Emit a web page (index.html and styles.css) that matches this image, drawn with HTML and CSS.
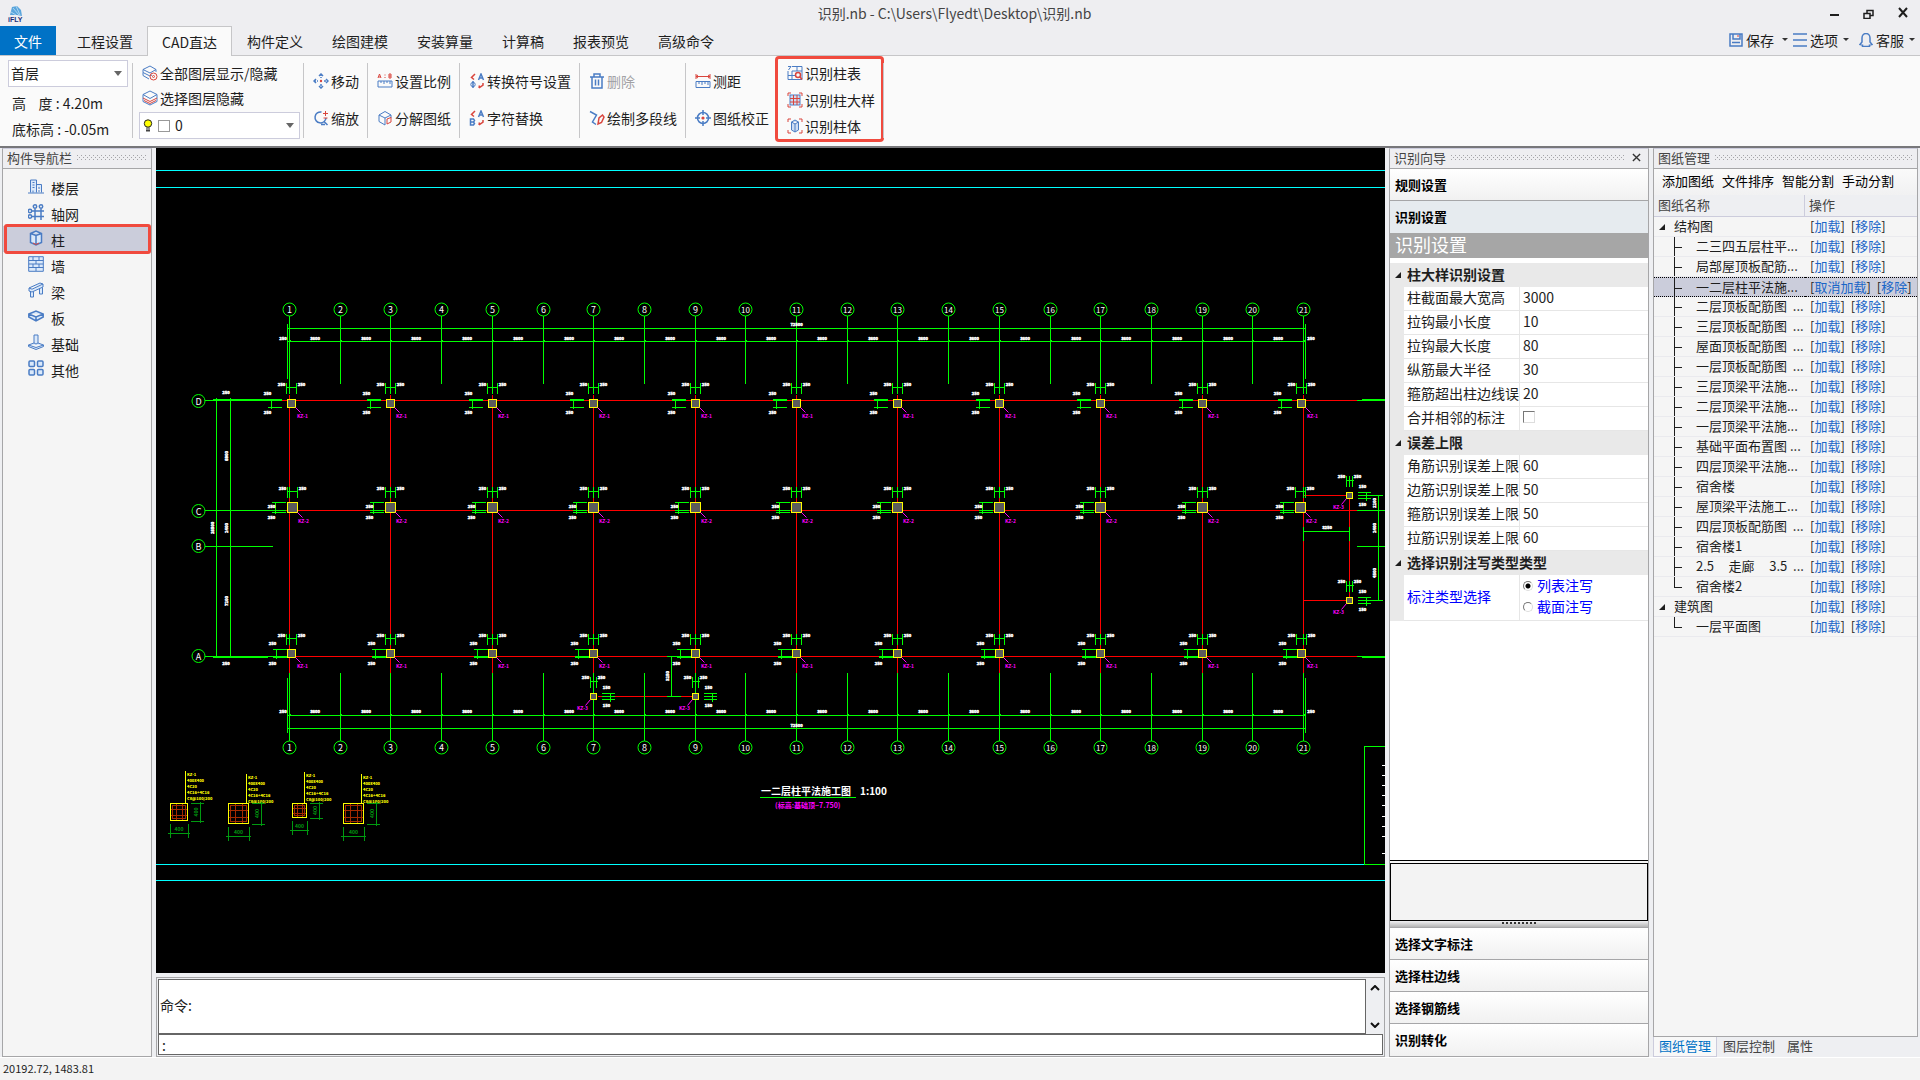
FILE: index.html
```html
<!DOCTYPE html>
<html lang="zh-CN">
<head>
<meta charset="utf-8">
<title>识别.nb</title>
<link rel="stylesheet" href="styles.css">
</head>
<body>
<svg class="sprite" aria-hidden="true">
  <symbol id="i-layers-all" viewBox="0 0 16 16"><g class="b"><path d="M1 4.5 8 1l6 3.5L8 8z"/><path d="M1 4.500v3L8 11l2-1M14 4.500v2.400M1 7.500v3L7 14"/></g><g class="r"><circle cx="11.500" cy="11.500" r="3.500"/><circle cx="11.500" cy="11.500" r="1"/></g></symbol>
  <symbol id="i-layers" viewBox="0 0 16 16"><path class="b" d="M1 4.500 8 1l7 3.500L8 8.500zM1 4.500v7L8 15l7-3.500v-7"/><path class="r" d="M1 8l7 3.500L15 8M2 10.500l6 3 6-3"/></symbol>
  <symbol id="i-bulb" viewBox="0 0 10 14"><circle cx="5" cy="4.500" r="3.700" fill="#ff0" stroke="#222"/><path d="M3 8.500h4v4H3z" fill="#444"/><path d="M3 10h4" stroke="#ddd"/></symbol>
  <symbol id="i-move" viewBox="0 0 16 16"><g class="b w"><path d="M8 1v4M8 11v4M1 8h4M11 8h4" stroke-dasharray="2 1"/><path d="M6 3 8 1l2 2M6 13l2 2 2-2M3 6 1 8l2 2M13 6l2 2-2 2"/></g><circle cx="8" cy="8" r="1.200" fill="#d9453d"/></symbol>
  <symbol id="i-zoom" viewBox="0 0 16 16"><path class="b w" d="M8.500 2A5.500 5.500 0 1 0 13 8M11 11.500l3.500 3.500M8 14.500h4"/><path class="r" d="M12.500 1v5M10 3.500h5M10.500 8h4"/></symbol>
  <symbol id="i-scale" viewBox="0 0 16 16"><path class="r" d="M1 5l1.500-4L4 5M1.500 4h2M12 1v4h2V1zM12 3h2M8 1.500v1M8 4v1"/><path class="b" d="M1 8h14v6H1zM4 8v2M7 8v3M10 8v2M13 8v3"/></symbol>
  <symbol id="i-split" viewBox="0 0 16 16"><path class="b" d="M2 5l6-3.500L14 5 8 8zM2 5v6.500L8 15V8M14 5v3"/><path class="r" d="M10 9l4-1.500V12l-4 2z"/></symbol>
  <symbol id="i-convert" viewBox="0 0 16 16"><path class="b w" d="M9.500 7 12 1l2.500 6M10.500 5h3M4 8v7"/><circle class="b" cx="4" cy="11.500" r="2.200"/><path class="r w" d="M6 1 2.500 4.500 5 6.500M14 10v2l-4 3M10.500 12.500 10 15"/></symbol>
  <symbol id="i-replace" viewBox="0 0 16 16"><path class="b w" d="M9.500 7 12 1l2.500 6M10.500 5h3M1.500 9h3l1 1.500L4.500 12l1 1.500-1 1.500h-3zM1.500 9v6M1.500 12h3"/><path class="r w" d="M6 1 2.500 4.500 5 6.500M14 10v2l-4 3M10.500 12.500 10 15"/></symbol>
  <symbol id="i-trash" viewBox="0 0 16 16"><path class="b w" d="M1 4h14M5 3.500V1h6v2.500M3 4v11h10V4M6.500 6.500v6M9.500 6.500v6"/></symbol>
  <symbol id="i-polyline" viewBox="0 0 16 16"><path class="b w" d="M1 1.500 7.500 5 3.500 12 7 14.500"/><path class="r w" d="M9 14l1-6 3.500-3 1.500 2-2.500 5.500z"/></symbol>
  <symbol id="i-measure" viewBox="0 0 16 16"><path class="r" d="M1 1v5M15 1v5M1 3.500h14M3 2 1 3.500 3 5M13 2l2 1.500L13 5"/><path class="b" d="M1 8.500h14v6H1zM4 9v2M7 9v3M10 9v2M13 9v3"/></symbol>
  <symbol id="i-target" viewBox="0 0 16 16"><g class="b w"><circle cx="8" cy="8" r="5.500"/><path d="M8 0v5M8 11v5M0 8h5M11 8h5"/></g><circle cx="8" cy="8" r="1.600" fill="#d9453d"/></symbol>
  <symbol id="i-coltable" viewBox="0 0 16 16"><path class="b" d="M5 1.500h10v13H1V6M1 10.500h8M5 6v8M5 6h10M10 1.500V6M1 1.500h3L1.500 5"/><g class="r w"><circle cx="11" cy="10" r="2.500"/><path d="m13 12 2 2.500"/></g></symbol>
  <symbol id="i-coldetail" viewBox="0 0 16 16"><rect x="3" y="3" width="10" height="10" fill="#cddcf2" stroke="#4a7cc4"/><path class="r" d="M1 4V1h3M12 1h3v3M1 12v3h3M12 15h3v-3M6.500 3v10M10 3v10M3 6.500h10M3 10h10"/></symbol>
  <symbol id="i-colbody" viewBox="0 0 16 16"><path class="r" d="M1 4V1h3M12 1h3v3M1 12v3h3M12 15h3v-3"/><path d="M4.500 4 8 2l3.500 2v8L8 14l-3.500-2zM4.500 4 8 6l3.500-2M8 6v8" fill="#cddcf2" stroke="#4a7cc4"/></symbol>
  <symbol id="i-floor" viewBox="0 0 16 16"><g class="f"><path d="M2.500 14.500V2h6v12.500M8.500 6.500h5v8"/><path d="M0 15h16M4.500 4.500h2M4.500 7h2M4.500 9.500h2M5 12.500v2M11 9v2M11 12v2"/></g></symbol>
  <symbol id="i-axis" viewBox="0 0 16 16"><g class="b w"><circle cx="7" cy="2.500" r="1.700"/><circle cx="13" cy="2.500" r="1.700"/><circle cx="2" cy="7" r="1.700"/><circle cx="2" cy="12.500" r="1.700"/><path d="M7 4.500V16M13 4.500V16M4 7h12M4 12.500h12"/></g></symbol>
  <symbol id="i-column" viewBox="0 0 16 16"><path class="f w" d="M2.500 3.500 8 1l5.500 2.500v9L8 15l-5.500-2.500zM2.500 3.500 8 5.500l5.500-2M8 5.500V14"/><path class="r" d="m5 13 3 1.500 3-1.500"/></symbol>
  <symbol id="i-wall" viewBox="0 0 16 16"><path class="f" d="M.7.700h14.600v14.600H.7zM.7 4.500h14.600M.7 8h14.600M.7 11.500h14.600M5 1v3.500M11 1v3.500M8 4.500V8M5 8v3.500M11 8v3.500M8 11.500V15"/></symbol>
  <symbol id="i-beam" viewBox="0 0 16 16"><path class="f" d="M1 6 12 1l3 1v3L4 10l-3-1zM1 6l3 1.200L15 2M2.500 9.500V15h3V9.500M11.500 6.500V12h3V5.500"/></symbol>
  <symbol id="i-slab" viewBox="0 0 16 16"><path class="f w" d="M.8 6 8 3l7.200 3v3L8 13 .8 9zM.8 6 8 9l7.200-3M8 9v3.500"/></symbol>
  <symbol id="i-base" viewBox="0 0 16 16"><path class="f" d="M6 1h4v8l5.500 2v1.500L8 15.500.5 12.500V11L6 9zM.5 11 8 13.500 15.500 11M6 9l2 1 2-1"/></symbol>
  <symbol id="i-other" viewBox="0 0 16 16"><g class="f w"><rect x="1" y="1" width="5.500" height="5.500" rx="1"/><rect x="9.500" y="1" width="5.500" height="5.500" rx="1"/><rect x="1" y="9.500" width="5.500" height="5.500" rx="1"/><rect x="9.500" y="9.500" width="5.500" height="5.500" rx="1"/></g></symbol>
  <symbol id="i-save" viewBox="0 0 14 14"><path class="b w" d="M1 1h12v12H1zM4 1v5h7V1M3 9.500h8"/><path class="r" d="M9 2v2"/></symbol>
  <symbol id="i-options" viewBox="0 0 14 14"><path class="b w" d="M0 1h14M0 7h14M0 13h14"/></symbol>
  <symbol id="i-service" viewBox="0 0 14 14"><path class="b w" d="M3 9V5a4 4.500 0 0 1 8 0v4l2 2.500-2.500.5v1.500h-7V12L1 11.500z"/></symbol>
</svg>

<header class="titlebar">
  <svg class="logo" viewBox="0 0 16 18" role="img" aria-label="iFLY"><path d="M2 10 4 2l5-1 4 4 1 6-5-1z" fill="#5aa5dc"/><path d="M5 3l6 7M3 7l5 3M8 1l4 9" stroke="#bfe0f5" stroke-width=".8"/><text x="0" y="17" class="logo-text">iFLY</text></svg>
  <h1 class="title">识别.nb - C:\Users\Flyedt\Desktop\识别.nb</h1>
  <div class="window-buttons">
    <button type="button" aria-label="最小化"><svg viewBox="0 0 12 12"><path d="M1 8h9" stroke-width="2"/></svg></button>
    <button type="button" aria-label="还原"><svg viewBox="0 0 12 12"><path d="M1 6.500h6v5H1zM4 6V3.500h6v5H7" stroke-width="1.500"/></svg></button>
    <button type="button" aria-label="关闭"><svg viewBox="0 0 12 12"><path d="m2 1 8 9M10 1 2 10" stroke-width="2"/></svg></button>
  </div>
</header>

<nav class="tabs">
  <button type="button" class="tab tab-file">文件</button>
  <button type="button" class="tab">工程设置</button>
  <button type="button" class="tab tab-active">CAD直达</button>
  <button type="button" class="tab">构件定义</button>
  <button type="button" class="tab">绘图建模</button>
  <button type="button" class="tab">安装算量</button>
  <button type="button" class="tab">计算稿</button>
  <button type="button" class="tab">报表预览</button>
  <button type="button" class="tab">高级命令</button>
  <div class="quick">
    <button type="button" class="caret quick-save"><svg><use href="#i-save"/></svg>保存</button>
    <button type="button" class="caret"><svg><use href="#i-options"/></svg>选项</button>
    <button type="button" class="caret quick-service"><svg><use href="#i-service"/></svg>客服</button>
  </div>
</nav>

<section class="ribbon">
  <div class="group group-floor">
    <span class="combo"><select aria-label="楼层"><option>首层</option></select></span>
    <span>高 &nbsp; &nbsp;度 : 4.20m</span>
    <span>底标高 : -0.05m</span>
  </div>
  <div class="group group-layers">
    <button type="button" class="tool"><svg><use href="#i-layers-all"/></svg>全部图层显示/隐藏</button>
    <button type="button" class="tool"><svg><use href="#i-layers"/></svg>选择图层隐藏</button>
    <span class="combo"><svg class="bulb"><use href="#i-bulb"/></svg><i class="swatch"></i><select aria-label="图层"><option>0</option></select></span>
  </div>
  <div class="group">
    <button type="button" class="tool"><svg><use href="#i-move"/></svg>移动</button>
    <button type="button" class="tool"><svg><use href="#i-zoom"/></svg>缩放</button>
  </div>
  <div class="group">
    <button type="button" class="tool"><svg><use href="#i-scale"/></svg>设置比例</button>
    <button type="button" class="tool"><svg><use href="#i-split"/></svg>分解图纸</button>
  </div>
  <div class="group">
    <button type="button" class="tool"><svg><use href="#i-convert"/></svg>转换符号设置</button>
    <button type="button" class="tool"><svg><use href="#i-replace"/></svg>字符替换</button>
  </div>
  <div class="group">
    <button type="button" class="tool" disabled><svg><use href="#i-trash"/></svg>删除</button>
    <button type="button" class="tool"><svg><use href="#i-polyline"/></svg>绘制多段线</button>
  </div>
  <div class="group group-measure">
    <button type="button" class="tool"><svg><use href="#i-measure"/></svg>测距</button>
    <button type="button" class="tool"><svg><use href="#i-target"/></svg>图纸校正</button>
  </div>
  <div class="group group-columns">
    <button type="button" class="tool"><svg><use href="#i-coltable"/></svg>识别柱表</button>
    <button type="button" class="tool"><svg><use href="#i-coldetail"/></svg>识别柱大样</button>
    <button type="button" class="tool"><svg><use href="#i-colbody"/></svg>识别柱体</button>
  </div>
</section>

<main class="workspace">
  <aside class="panel panel-nav">
    <h2 class="panel-head"><span>构件导航栏</span><i class="grip"></i></h2>
    <ul class="nav-list">
      <li><a href="#"><svg><use href="#i-floor"/></svg>楼层</a></li>
      <li><a href="#"><svg><use href="#i-axis"/></svg>轴网</a></li>
      <li><a href="#" class="selected"><svg><use href="#i-column"/></svg>柱</a></li>
      <li><a href="#"><svg><use href="#i-wall"/></svg>墙</a></li>
      <li><a href="#"><svg><use href="#i-beam"/></svg>梁</a></li>
      <li><a href="#"><svg><use href="#i-slab"/></svg>板</a></li>
      <li><a href="#"><svg><use href="#i-base"/></svg>基础</a></li>
      <li><a href="#"><svg><use href="#i-other"/></svg>其他</a></li>
    </ul>
  </aside>

  <div class="center">
    <svg id="drawing" class="drawing" viewBox="156 148 1229 825" role="img" aria-label="一二层柱平法施工图"></svg>
    <div class="command">
      <div class="command-log">
        <output class="command-text">命令:</output>
        <div class="scroll">
          <button type="button" aria-label="向上"><svg viewBox="0 0 10 6"><path d="m1 5 4-4 4 4"/></svg></button>
          <button type="button" aria-label="向下"><svg viewBox="0 0 10 6"><path d="m1 1 4 4 4-4"/></svg></button>
        </div>
      </div>
      <input class="command-input" type="text" aria-label="命令输入" value=":">
    </div>
  </div>

  <aside class="panel panel-wizard">
    <h2 class="panel-head"><span>识别向导</span><i class="grip"></i><button type="button" class="close" aria-label="关闭"><svg viewBox="0 0 10 10"><path d="m1 1 8 8M9 1 1 9"/></svg></button></h2>
    <button type="button" class="step">规则设置</button>
    <button type="button" class="step step-open">识别设置</button>
    <h3 class="banner">识别设置</h3>
    <div class="props">
      <table>
        <colgroup><col class="c-gutter"><col class="c-name"><col></colgroup>
        <tbody>
          <tr class="cat"><th colspan="3">柱大样识别设置</th></tr>
          <tr><td></td><td><label for="p1">柱截面最大宽高</label></td><td><input id="p1" type="text" value="3000"></td></tr>
          <tr><td></td><td><label for="p2">拉钩最小长度</label></td><td><input id="p2" type="text" value="10"></td></tr>
          <tr><td></td><td><label for="p3">拉钩最大长度</label></td><td><input id="p3" type="text" value="80"></td></tr>
          <tr><td></td><td><label for="p4">纵筋最大半径</label></td><td><input id="p4" type="text" value="30"></td></tr>
          <tr><td></td><td><label for="p5">箍筋超出柱边线误</label></td><td><input id="p5" type="text" value="20"></td></tr>
          <tr><td></td><td><label for="p6">合并相邻的标注</label></td><td><input id="p6" type="checkbox"></td></tr>
          <tr class="cat"><th colspan="3">误差上限</th></tr>
          <tr><td></td><td><label for="p7">角筋识别误差上限</label></td><td><input id="p7" type="text" value="60"></td></tr>
          <tr><td></td><td><label for="p8">边筋识别误差上限</label></td><td><input id="p8" type="text" value="50"></td></tr>
          <tr><td></td><td><label for="p9">箍筋识别误差上限</label></td><td><input id="p9" type="text" value="50"></td></tr>
          <tr><td></td><td><label for="p10">拉筋识别误差上限</label></td><td><input id="p10" type="text" value="60"></td></tr>
          <tr class="cat"><th colspan="3">选择识别注写类型类型</th></tr>
          <tr class="choice"><td></td><td>标注类型选择</td><td>
            <label><input type="radio" name="kind" checked>列表注写</label>
            <label><input type="radio" name="kind">截面注写</label>
          </td></tr>
        </tbody>
      </table>
    </div>
    <div class="hint"></div>
    <div class="splitter"><i></i></div>
    <button type="button" class="step">选择文字标注</button>
    <button type="button" class="step">选择柱边线</button>
    <button type="button" class="step">选择钢筋线</button>
    <button type="button" class="step">识别转化</button>
  </aside>

  <aside class="manager">
    <div class="panel panel-manager">
      <h2 class="panel-head"><span>图纸管理</span><i class="grip"></i></h2>
      <div class="manager-tools">
        <button type="button">添加图纸</button><button type="button">文件排序</button><button type="button">智能分割</button><button type="button">手动分割</button>
      </div>
      <table class="tree">
        <thead><tr><th>图纸名称</th><th>操作</th></tr></thead>
        <tbody>
          <tr class="root"><td>结构图</td><td>[<a href="#">加载</a>]<span>[<a href="#">移除</a>]</span></td></tr>
          <tr><td>二三四五层柱平...</td><td>[<a href="#">加载</a>]<span>[<a href="#">移除</a>]</span></td></tr>
          <tr><td>局部屋顶板配筋...</td><td>[<a href="#">加载</a>]<span>[<a href="#">移除</a>]</span></td></tr>
          <tr class="current"><td>一二层柱平法施...</td><td>[<a href="#">取消加载</a>]<span>[<a href="#">移除</a>]</span></td></tr>
          <tr><td>二层顶板配筋图 &nbsp;...</td><td>[<a href="#">加载</a>]<span>[<a href="#">移除</a>]</span></td></tr>
          <tr><td>三层顶板配筋图 &nbsp;...</td><td>[<a href="#">加载</a>]<span>[<a href="#">移除</a>]</span></td></tr>
          <tr><td>屋面顶板配筋图 &nbsp;...</td><td>[<a href="#">加载</a>]<span>[<a href="#">移除</a>]</span></td></tr>
          <tr><td>一层顶板配筋图 &nbsp;...</td><td>[<a href="#">加载</a>]<span>[<a href="#">移除</a>]</span></td></tr>
          <tr><td>三层顶梁平法施...</td><td>[<a href="#">加载</a>]<span>[<a href="#">移除</a>]</span></td></tr>
          <tr><td>二层顶梁平法施...</td><td>[<a href="#">加载</a>]<span>[<a href="#">移除</a>]</span></td></tr>
          <tr><td>一层顶梁平法施...</td><td>[<a href="#">加载</a>]<span>[<a href="#">移除</a>]</span></td></tr>
          <tr><td>基础平面布置图 ...</td><td>[<a href="#">加载</a>]<span>[<a href="#">移除</a>]</span></td></tr>
          <tr><td>四层顶梁平法施...</td><td>[<a href="#">加载</a>]<span>[<a href="#">移除</a>]</span></td></tr>
          <tr><td>宿舍楼</td><td>[<a href="#">加载</a>]<span>[<a href="#">移除</a>]</span></td></tr>
          <tr><td>屋顶梁平法施工...</td><td>[<a href="#">加载</a>]<span>[<a href="#">移除</a>]</span></td></tr>
          <tr><td>四层顶板配筋图 &nbsp;...</td><td>[<a href="#">加载</a>]<span>[<a href="#">移除</a>]</span></td></tr>
          <tr><td>宿舍楼1</td><td>[<a href="#">加载</a>]<span>[<a href="#">移除</a>]</span></td></tr>
          <tr><td>2.5 &nbsp; &nbsp; 走廊 &nbsp; &nbsp; 3.5 &nbsp;...</td><td>[<a href="#">加载</a>]<span>[<a href="#">移除</a>]</span></td></tr>
          <tr class="last"><td>宿舍楼2</td><td>[<a href="#">加载</a>]<span>[<a href="#">移除</a>]</span></td></tr>
          <tr class="root"><td>建筑图</td><td>[<a href="#">加载</a>]<span>[<a href="#">移除</a>]</span></td></tr>
          <tr class="last"><td>一层平面图</td><td>[<a href="#">加载</a>]<span>[<a href="#">移除</a>]</span></td></tr>
        </tbody>
      </table>
    </div>
    <nav class="bottom-tabs">
      <button type="button" class="active">图纸管理</button>
      <button type="button">图层控制</button>
      <button type="button">属性</button>
    </nav>
  </aside>
</main>

<footer class="status">20192.72, 1483.81</footer>
<script src="drawing.js"></script>
</body>
</html>
```
FILE: styles.css
```css
* { box-sizing: border-box; }

body {
  margin: 0;
  min-height: 100vh;
  display: flex;
  flex-direction: column;
  background: #eeeff2;
  color: #1e1e1e;
  font: 14px/20px "Noto Sans CJK SC", "Noto Sans", sans-serif;
}

button, input, select { font: inherit; color: inherit; }
button { padding: 0; border: 0; background: none; white-space: nowrap; }
h1, h2, h3 { margin: 0; font-weight: 400; }

.sprite { display: none; }
.b { fill: none; stroke: #4a7cc4; }
.r { fill: none; stroke: #d9453d; }
.f { fill: #dbe9fa; stroke: #4a7cc4; }
.w { stroke-width: 1.5; }

/* Title bar */
.titlebar {
  height: 26px;
  display: grid;
  grid-template-columns: 1fr auto 1fr;
  align-items: center;
  padding: 0 11px 0 8px;
  background: #eeeef1;
}
.logo { width: 16px; height: 18px; margin-top: 2px; }
.logo-text { font: 900 7px "Liberation Sans", sans-serif; fill: #1a2f7a; }
.title { padding-right: 8px; font-size: 14px; color: #444; }
.window-buttons { justify-self: end; display: flex; gap: 22px; }
.window-buttons button { display: flex; }
.window-buttons svg { width: 12px; height: 12px; fill: none; stroke: #1e1e1e; }

/* Ribbon tabs */
.tabs {
  height: 30px;
  display: flex;
  background: #eeeef1;
  border-bottom: 1px solid #c6c6c8;
}
.tab { padding: 0 14px 0 15px; height: 29px; }
.tab-file { width: 56px; margin-right: 6px; padding: 0; background: #0072c6; color: #fff; }
.tab-active {
  height: 30px;
  padding: 0 14px;
  border: 1px solid #c6c6c8;
  border-bottom: 0;
  background: #fafafa;
}
.quick { margin-left: auto; display: flex; align-items: center; padding: 0 5px 2px 0; }
.quick button { display: flex; align-items: center; gap: 3px; }
.quick svg { width: 14px; height: 14px; }
.quick-service { margin-left: 10px; }
.quick-save { margin-right: 5px; }
.caret::after {
  content: "";
  margin-left: 2px;
  border: 3px solid transparent;
  border-top-color: #333;
  border-bottom: 0;
}
.quick-save::after { margin-left: 5px; }

/* Ribbon */
.ribbon {
  min-height: 92px;
  display: flex;
  padding: 4px 0 3px;
  background: #fafafa;
  border-bottom: 2px solid #77777a;
}
.group {
  position: relative;
  display: flex;
  flex-direction: column;
  justify-content: space-around;
  align-items: flex-start;
  padding: 2px 9px 6px 9px;
}
.group::after {
  content: "";
  position: absolute;
  right: 0;
  top: 3px;
  bottom: 5px;
  width: 1px;
  background: #c6c6c8;
}
.group-floor { padding: 0 5px 4px 8px; justify-content: space-between; }
.group-floor > span:not(.combo) { padding-left: 4px; }
.group-layers { padding: 3px 4px 4px 6px; justify-content: space-between; }
.group-layers .tool { padding-left: 3px; }
.group-columns { padding: 3px 9px 7px 9px; justify-content: space-between; }
.group-columns::before {
  content: "";
  position: absolute;
  inset: -4px 0 1px -3px;
  border: 3px solid #f04a3e;
  border-radius: 4px;
}
.tool { display: flex; align-items: center; gap: 2px; }
.tool svg { width: 16px; height: 16px; }
.tool:disabled { color: #a2a2a6; }
.combo {
  position: relative;
  width: 120px;
  height: 27px;
  display: flex;
  align-items: center;
  border: 1px solid #ccccdc;
  background: #fff;
}
.combo::after {
  content: "";
  position: absolute;
  right: 5px;
  border: 4px solid transparent;
  border-top: 5px solid #666;
  border-bottom: 0;
}
.combo select {
  flex: 1;
  appearance: none;
  border: 0;
  padding: 0 2px 2px;
  background: transparent;
}
.group-layers .combo { width: 161px; padding-left: 3px; }
.bulb { width: 10px; height: 14px; }
.swatch { width: 12px; height: 12px; margin: 0 3px 0 5px; border: 1px solid #999; }

/* Workspace */
.workspace {
  flex: 1;
  display: flex;
  gap: 4px;
  padding: 0 2px 0 2px;
  background: #eeeff2;
}
.panel {
  display: flex;
  flex-direction: column;
  border: 1px solid #a6a6a8;
  border-top-color: #ccccdc;
  background: #f5f5f5;
}
.panel-nav { width: 150px; }
.panel-wizard { width: 260px; }
.manager { width: 265px; display: flex; flex-direction: column; }
.panel-manager { flex: 1; }
.panel-head {
  height: 20px;
  display: flex;
  align-items: center;
  gap: 5px;
  padding: 0 4px 2px;
  border-bottom: 1px solid #a6a6a8;
  background: #eeeef1;
  font-size: 13px;
  line-height: 16px;
  color: #444;
}
.grip {
  flex: 1;
  height: 6px;
  background:
    conic-gradient(at 1px 1px, transparent 75%, #a4a4a8 0) 0 0 / 4px 4px,
    conic-gradient(at 1px 1px, transparent 75%, #a4a4a8 0) 2px 2px / 4px 4px;
}
.close { display: flex; padding: 3px; }
.close svg { width: 9px; height: 9px; stroke: #333; stroke-width: 1.500; }

/* Component navigation */
.nav-list { list-style: none; margin: 0; padding: 5px 0 0; }
.nav-list a {
  position: relative;
  height: 26px;
  display: flex;
  align-items: center;
  gap: 7px;
  padding: 2px 0 0 25px;
  color: #1e1e1e;
  text-decoration: none;
}
.nav-list svg { width: 16px; height: 16px; margin-bottom: 5px; }
.nav-list .selected { background: #cbcddb; }
.selected::after {
  content: "";
  position: absolute;
  inset: -2px 0 -2px 1px;
  border: 3px solid #f04a3e;
  border-radius: 3px;
}

/* Drawing and command line */
.center { flex: 1; min-width: 0; display: flex; flex-direction: column; gap: 4px; }
.drawing { flex: 1 1 0; min-height: 0; width: 100%; background: #000; }
.drawing text { font-family: "Noto Sans CJK SC", sans-serif; text-anchor: middle; }
.drawing .start { text-anchor: start; }
.ln { fill: none; shape-rendering: crispEdges; }
.green { stroke: #0f0; }
.red { stroke: #f00; }
.cyan { stroke: #0ff; }
.white { stroke: #fff; }
.thick { stroke-width: 2; }
.dark { stroke: #009a10; }
.bar { stroke: #a32a00; }
.leader { stroke: #f0f; fill: none; }
.yellow { stroke: #ff0; }
.col { fill: #5c5c5c; stroke: #ff0; shape-rendering: crispEdges; }
.bubble { fill: none; stroke: #0f0; }
.t-axis { fill: #fff; font-size: 9px; }
.t-axis2 { fill: #fff; font-size: 8px; }
.t-dim { fill: #fff; stroke: #fff; stroke-width: .4px; font-size: 4px; font-weight: 900; }
.t-col { fill: #f0f; font-size: 5px; font-weight: 700; }
.t-note { fill: #ff0; font-size: 4px; font-weight: 900; }
.t-dark { fill: #009a10; font-size: 5px; font-weight: 700; }
.t-title { fill: #fff; font-size: 10px; font-weight: 700; }
.t-sub { fill: #f0f; font-size: 7px; font-weight: 700; }
.command {
  height: 80px;
  display: flex;
  flex-direction: column;
  padding: 1px;
  border: 1px solid #a6a6a8;
}
.command-log { flex: 1; display: flex; gap: 1px; }
.command-text {
  flex: 1;
  display: flex;
  align-items: center;
  padding: 0 0 4px 1px;
  border: 1px solid #666;
  background: #fff;
}
.scroll { width: 16px; display: flex; flex-direction: column; justify-content: space-between; align-items: center; padding: 6px 0; }
.scroll button { display: flex; }
.scroll svg { width: 10px; height: 6px; fill: none; stroke: #111; stroke-width: 2; }
.command-input { width: 100%; height: 21px; padding: 0 3px; border: 1px solid #666; background: #fff; }

/* Recognition wizard */
.step {
  height: 32px;
  flex: none;
  padding-left: 5px;
  border-bottom: 1px solid #a6a6a8;
  background: linear-gradient(#fff, #f1f1f1);
  font-size: 13px;
  font-weight: 700;
  text-align: left;
  color: #000;
}
.step:last-child { border-bottom: 0; }
.step-open { background: #e6ebef; border-bottom: 0; }
.banner { height: 25px; padding-left: 5px; background: #a6a6a6; color: #fff; font-size: 18px; line-height: 22px; }
.props { flex: 1; padding-top: 5px; background: #fff; border-bottom: 1px solid #000; }
.props table { width: 100%; border-spacing: 0; table-layout: fixed; }
.c-gutter { width: 14px; }
.c-name { width: 116px; }
.props th { height: 24px; padding: 0 0 2px; text-align: left; background: #e9e9e9; line-height: 20px; }
.props th::before {
  content: "";
  display: inline-block;
  margin: 0 6px 2px 5px;
  border-left: 6px solid transparent;
  border-bottom: 6px solid #1e1e1e;
}
.props td { height: 24px; padding: 0 0 3px; border-bottom: 1px solid #e6e6e6; line-height: 20px; white-space: nowrap; }
.props td:first-child { background: #e9e9e9; border-color: #e9e9e9; }
.props td:nth-child(2) { padding-left: 3px; border-right: 1px solid #e6e6e6; }
.props td:nth-child(3) { padding-left: 3px; }
.props input[type="text"] { display: block; width: 100%; height: 20px; padding: 0; border: 0; background: none; }
.props input[type="checkbox"] {
  appearance: none;
  display: block;
  width: 12px;
  height: 12px;
  margin: 0;
  border: 1px solid #777;
  border-right-color: #ddd;
  border-bottom-color: #ddd;
}
.props .choice td { color: #00f; height: 46px; }
.choice label { display: flex; align-items: center; gap: 4px; height: 21px; line-height: 21px; }
.choice input {
  appearance: none;
  width: 10px;
  height: 10px;
  margin: 0;
  border: 1px solid #777;
  border-right-color: #ddd;
  border-bottom-color: #ddd;
  border-radius: 50%;
}
.choice input:checked { background: radial-gradient(circle, #000 2px, #fff 3px); }
.hint { height: 58px; margin-top: 2px; border: 1px solid #000; background: #f3f3f3; }
.splitter {
  height: 7px;
  display: flex;
  justify-content: center;
  border-bottom: 1px solid #a6a6a8;
  background: linear-gradient(#f0f0f2, #b4b4b4);
}
.splitter i { width: 35px; height: 2px; margin-top: 1px; background: repeating-linear-gradient(90deg, #333 0 2px, transparent 2px 4px); }

/* Drawing manager */
.manager-tools {
  height: 26px;
  display: flex;
  gap: 8px;
  padding: 0 8px 2px;
  background: linear-gradient(#fafafa, #f1f1f2);
  font-size: 13px;
  color: #000;
}
.tree { width: 100%; border-spacing: 0; table-layout: fixed; font-size: 13px; line-height: 16px; }
.tree th {
  height: 22px;
  padding: 0 4px 2px;
  border-bottom: 1px solid #ccccdc;
  background: #eeeff2;
  font-weight: 400;
  text-align: left;
  color: #444;
}
.tree th:first-child { width: 151px; border-right: 1px solid #ccccdc; }
.tree td { position: relative; height: 20px; padding: 0 0 2px 5px; border-bottom: 1px solid #eaeaee; white-space: nowrap; }
.tree td:first-child { padding-left: 42px; }
.tree td:first-child::before {
  content: "";
  position: absolute;
  left: 20px;
  top: 0;
  height: 19px;
  border-left: 1px solid #1e1e1e;
}
.tree td:first-child::after {
  content: "";
  position: absolute;
  left: 20px;
  top: 10px;
  width: 8px;
  border-top: 1px solid #1e1e1e;
}
.tree .last td:first-child::before { height: 10px; }
.tree .root td:first-child { padding-left: 20px; }
.tree .root td:first-child::after { display: none; }
.tree .root td:first-child::before {
  left: 5px;
  top: 7px;
  height: 0;
  border-left: 6px solid transparent;
  border-bottom: 6px solid #1e1e1e;
}
.tree a { color: #1a66c8; text-decoration: none; }
.tree td span { margin-left: 6px; }
.tree .current td { padding-bottom: 1px; background: #cbcddb; border-top: 1px dotted #000; border-bottom: 1px dotted #000; }
.bottom-tabs { height: 20px; display: flex; font-size: 13px; line-height: 16px; color: #444; }
.bottom-tabs button { padding: 0 6px 2px; }
.bottom-tabs .active { padding: 0 5px 2px; border: 1px solid #ccccdc; border-top: 0; background: #f8f8f8; color: #0072c6; }

.status { height: 23px; padding-left: 3px; border-top: 1px solid #fff; background: #f3f3f3; font-size: 11px; line-height: 21px; }
```
FILE: drawing.js
```js
// Column plan: axes, dimensions, columns and section details, in sheet units.
const svg = document.getElementById("drawing");
const parts = [];
const line = (cls, d) => parts.push(`<path class="ln ${cls}" d="${d}"/>`);
const text = (cls, x, y, s, rot) =>
  parts.push(`<text class="${cls}" x="${x}" y="${y}"${rot ? ` transform="rotate(-90 ${x} ${y})"` : ""}>${s}</text>`);
const bubble = (x, y, s) => {
  parts.push(`<circle class="bubble" cx="${x}" cy="${y}" r="6.5"/>`);
  text(s > 9 ? "t-axis2" : "t-axis", x, y + 3.5, s);
};
const axisX = n => Math.round(289 + (n - 1) * 50.7) + 0.5;

line("cyan", "M156 170.5H1385M156 187.5H1385M156 864.5H1385M156 880.5H1385");

// Red grid
line("red", "M282 400.5H1357M282 510.5H1357M282 656.500H1357");
for (let n = 1; n <= 21; n += 2) line("red", `M${axisX(n)} 395V673`);
line("red", "M598 696.5H695M1303 495.5H1347M1303 600.5H1349M1349.5 499V597");

// Numbered axes
for (let n = 1; n <= 21; n++) {
  const x = axisX(n);
  bubble(x, 309.5, n);
  bubble(x, 747.5, n);
  line("green", `M${x} 316V${n % 2 ? 394 : 384}M${x} 673V741`);
  if (n < 21) {
    text("t-dim", x + 25.5, 339.5, "3600");
    text("t-dim", x + 25.5, 712.500, "3600");
  }
  line("green", `M${x - 1} 342l2-2M${x - 1} 716l2-2`);
}
line("green", "M287 328.5H1306M287 341.5H1306M287.5 324V379M1305.5 324V379");
line("green", "M287 715.5H1306M287 728.5H1306M287.5 678V733M1305.5 678V733");
for (const y of [339.5, 712.5]) {
  text("t-dim", 283, y, "250");
  text("t-dim", 1311, y, "250");
}
text("t-dim", 796.5, 326, "72500");
text("t-dim", 796.5, 726.5, "72500");

// Lettered axes
[["D", 401], ["C", 511], ["B", 546], ["A", 656]].forEach(([s, y]) => bubble(198.5, y, s));
line("green", "M205 400.5H273M205 510.5H282M205 546.5H273M205 656.5H273M216.5 398V658M230.5 398V658");
line("green", "M1357 400.5H1385M1357 510.5H1385M1357 546.5H1385M1357 656.5H1385");
line("green thick", "M213 400H268M213 657H268M1362 400H1385M1362 657H1385");
text("t-dim", 228, 456, "6900", 1);
text("t-dim", 214, 528, "16500", 1);
text("t-dim", 228, 528, "2400", 1);
text("t-dim", 228, 601, "7200", 1);
text("t-dim", 226, 394, "250");
text("t-dim", 226, 665, "250");

// Columns on axes D, C and A
const rows = [
  { y: 403.5, size: 9, top: 383, bar: [399.5, 400.5, 407.5], left: 20, label: "KZ-1", notes: [394.5, 414] },
  { y: 507.5, size: 11, top: 487, bar: [502.5, 510.5, 512.5], left: 17, label: "KZ-2", notes: [507.500, 519] },
  { y: 653.5, size: 9, top: 634, bar: [649.5, 656.5, 657.5], left: 15, label: "KZ-1", notes: [645, 664.5] }
];
for (const r of rows) {
  for (let n = 1; n <= 21; n += 2) {
    const ax = axisX(n);
    const shift = r.size === 11 ? 3 : 2;
    const x = n === 1 ? ax + shift : n === 21 ? ax - shift : ax;
    const h = (r.size - 1) / 2;
    line("green", `M${x - 5} ${r.top}v11M${ax} ${r.top}v11M${x + 5} ${r.top}v11M${x - 5} ${r.top + 4.5}h10`);
    text("t-dim", x - 10, r.top + 2.500, "250");
    text("t-dim", x + 10, r.top + 2.500, "250");
    r.bar.forEach(y => line("green", `M${x - r.left - 4} ${y}h14`));
    line("green", `M${x - r.left} ${r.bar[0] - 1}V${r.bar[2] + 1}`);
    text("t-dim", x - r.left - 4, r.notes[0], "250");
    text("t-dim", x - r.left - 4, r.notes[1], "250");
    parts.push(`<rect class="col" x="${x - h}" y="${r.y - h}" width="${2 * h}" height="${2 * h}"/>`);
    parts.push(`<path class="leader" d="M${x + h} ${r.y + h}l5 5"/>`);
    text("t-col", x + 11, r.y + h + 10, r.label);
  }
}

// Porch columns, dimensioned on the right
for (const [x, y] of [[593.5, 696.5], [695.5, 696.5], [1349.5, 495.5], [1349.5, 600.5]]) {
  line("green", `M${x - 3} ${y - 20}v11M${x} ${y - 20}v11M${x + 3} ${y - 20}v11M${x - 4} ${y - 15}h8`);
  text("t-dim", x - 8, y - 18, "250");
  text("t-dim", x + 8, y - 18, "250");
  line("green", `M${x + 8} ${y - 3}h13M${x + 8} ${y}h13M${x + 8} ${y + 3}h13M${x + 17} ${y - 4}v9`);
  text("t-dim", x + 13, y - 8, "150");
  text("t-dim", x + 13, y + 10, "150");
  parts.push(`<rect class="col" x="${x - 3}" y="${y - 3}" width="6" height="6"/>`);
  parts.push(`<path class="leader" d="M${x - 3} ${y + 3}l-5 6"/>`);
  text("t-col", x - 11, y + 13, "KZ-3");
}
line("green", "M671.5 656V697M667 656.5H681M667 696.5H681");
text("t-dim", 669, 676, "3250", 1);
line("green", "M1378.5 495V601M1368 495.500H1383M1368 600.500H1383");
text("t-dim", 1376, 503, "1200", 1);
text("t-dim", 1376, 528, "2400", 1);
text("t-dim", 1376, 573, "4500", 1);
line("green", "M1303 531.5H1350M1303.5 527V541M1349.5 527V541");
text("t-dim", 1327, 529, "3250");

// Section details with reinforcement notes
for (const [x, w, top] of [[170, 18, 771], [228, 21, 774], [292, 15, 772], [343, 21, 774]]) {
  const y = 803, r = x + w, b = y + w;
  const k = Math.round(w / 3);
  line("bar", `M${x + k}.500 ${y}v${w}M${x + 2 * k}.500 ${y}v${w}M${x} ${y + k}.500h${w}M${x} ${y + 2 * k}.500h${w}M${x + 2}.500 ${y + 2}.500h${w - 5}v${w - 5}h-${w - 5}z`);
  line("yellow", `M${x}.500 ${y}.500h${w - 1}v${w - 1}h-${w - 1}zM${r - 3}.500 ${top}V${y}`);
  ["KZ-1", "400x400", "4C20", "4C16+4C16", "C8@100/200"].forEach((s, i) => text("t-note start", r - 1, top + 5 + i * 6, s));
  line("dark", `M${r + 3} ${y}.500h13M${r + 3} ${b}.500h13M${r + 12}.500 ${y - 1}V${b + 2}`);
  text("t-dark", r + 10, y + w / 2, "400", 1);
  line("dark", `M${x}.500 ${b + 3}v14M${r}.500 ${b + 3}v14M${x - 2} ${b + 12}.500h${w + 4}`);
  text("t-dark", x + w / 2, b + 10, "400");
}

// Sheet title
text("t-title start", 761, 795, "一二层柱平法施工图");
text("t-title start", 860, 795, "1:100");
line("green", "M760 797.5H856");
text("t-sub start", 775, 808, "(标高:基础顶~7.750)");

// Title block at the sheet edge
line("green", "M1385 746.5H1364.5V864.5H1385");
line("white", [765, 775, 785, 795, 805, 816, 826, 836, 853].map(y => `M1382 ${y}.5h3`).join(""));

svg.innerHTML = parts.join("");
```
